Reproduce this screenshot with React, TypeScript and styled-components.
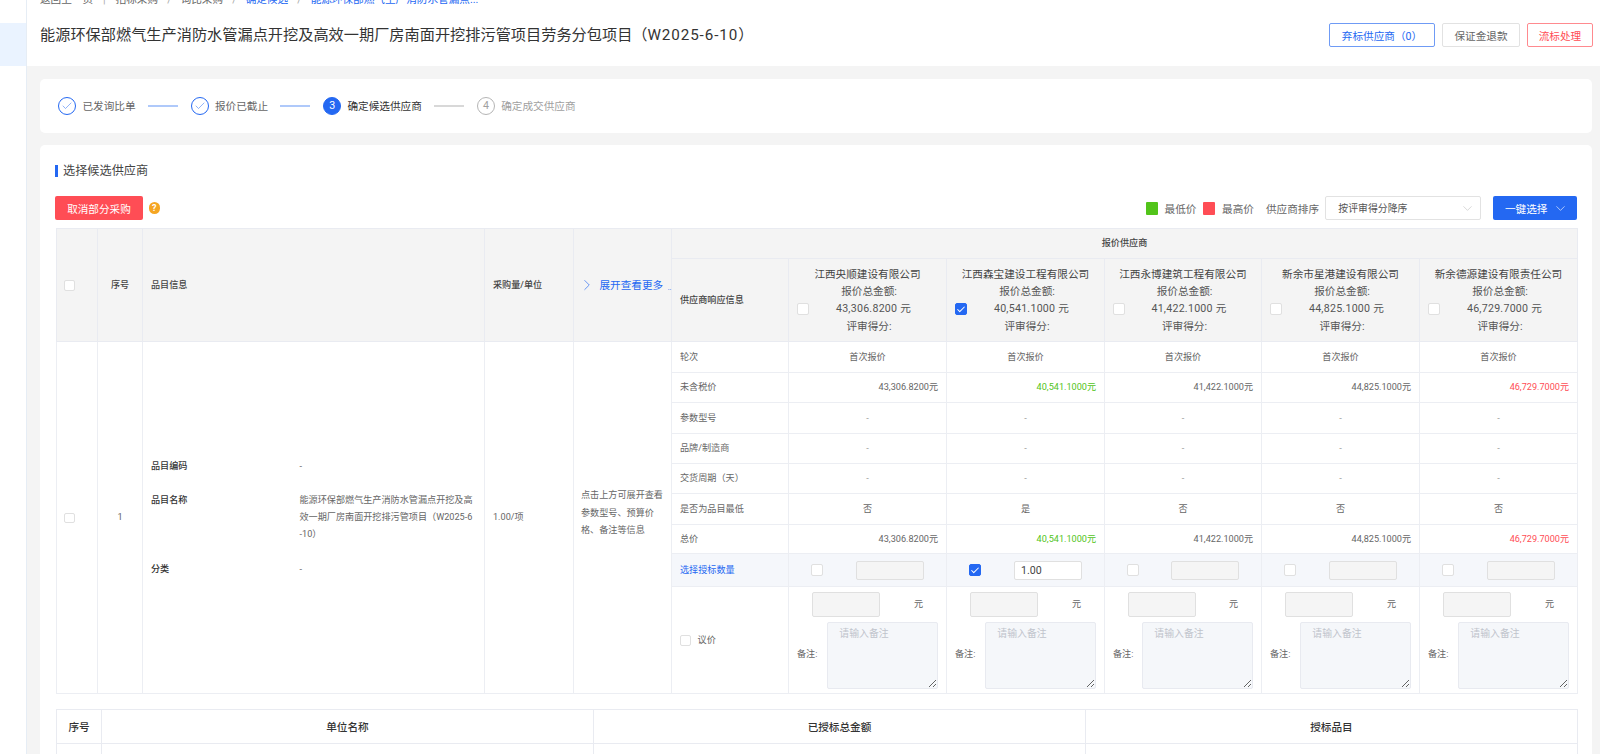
import { Fragment } from "react";
import { createGlobalStyle, styled } from "styled-components";
import { Check, ChevronDown, ChevronRight } from "lucide-react";

const GlobalStyle = createGlobalStyle`
  html, body {
    margin: 0;
    height: 100%;
    overflow: hidden;
  }
  body {
    font-family: Roboto, "Liberation Sans", "Noto Sans CJK SC", sans-serif;
    font-size: 9.12px;
    color: #666;
    background: #fff;
  }
  * { box-sizing: border-box; }
`;

const Layout = styled.div`
  display: flex;
  height: 754px;
  overflow: hidden;
`;

const Sidebar = styled.aside`
  flex: 0 0 27px;
  padding-top: 23px;
  background: #fff;
  border-right: 1px solid #e6edf5;
`;

const SideActive = styled.div`
  height: 43px;
  background: #eaf3ff;
`;

const Main = styled.main`
  flex: 1;
  min-width: 0;
  display: flex;
  flex-direction: column;
  background: #f4f4f4;
`;

const Header = styled.header`
  flex: 0 0 66px;
  padding: 0 7px 0 13px;
  background: #fff;
`;

const Crumbs = styled.nav`
  display: flex;
  align-items: center;
  height: 12px;
  margin-top: -6px;
  font-size: 10.64px;
  line-height: 12px;
`;

const Crumb = styled.span<{ $active?: boolean }>`
  color: ${({ $active }) => ($active ? "#2468f2" : "#666")};
  white-space: nowrap;
`;

const CrumbSep = styled.span`
  width: 22.5px;
  text-align: center;
  color: #aaa;
`;

const TitleRow = styled.div`
  display: flex;
  align-items: center;
  justify-content: space-between;
  margin-top: 17px;
`;

const Title = styled.h1`
  margin: 0;
  font-size: 15.2px;
  font-weight: 400;
  line-height: 24px;
  color: #333;
`;

const TitleCode = styled.span`
  letter-spacing: 0.9px;
`;

const HeaderActions = styled.div`
  display: flex;
  gap: 7px;
`;

const OutlineButton = styled.button<{ $tone: "blue" | "gray" | "red"; $w: number }>`
  width: ${({ $w }) => $w}px;
  height: 24.4px;
  padding: 0;
  font: inherit;
  font-size: 10.64px;
  background: #fff;
  border-radius: 2px;
  border: 1px solid
    ${({ $tone }) =>
      $tone === "blue" ? "#6f9bf5" : $tone === "red" ? "#ff8a8f" : "#e2e2e2"};
  color: ${({ $tone }) =>
    $tone === "blue" ? "#2468f2" : $tone === "red" ? "#ff4d55" : "#666"};
`;

const Content = styled.div`
  padding: 13px 8px 0 13px;
  display: flex;
  flex-direction: column;
  gap: 12px;
`;

const StepsCard = styled.section`
  display: flex;
  align-items: center;
  height: 54px;
  padding-left: 18px;
  background: #fff;
  border-radius: 5px;
`;

const Step = styled.div`
  display: flex;
  align-items: center;
  gap: 6px;
`;

const StepCircle = styled.span<{ $state: "done" | "active" | "todo" }>`
  display: flex;
  align-items: center;
  justify-content: center;
  width: 18.4px;
  height: 18.4px;
  border-radius: 50%;
  font-size: 10.64px;
  border: 1px solid ${({ $state }) => ($state === "todo" ? "#b5b5b5" : "#2468f2")};
  background: ${({ $state }) => ($state === "active" ? "#2468f2" : "#fff")};
  color: ${({ $state }) =>
    $state === "active" ? "#fff" : $state === "done" ? "#2468f2" : "#a0a0a0"};
`;

const StepLabel = styled.span<{ $state: "done" | "active" | "todo" }>`
  font-size: 10.64px;
  white-space: nowrap;
  color: ${({ $state }) =>
    $state === "active" ? "#333" : $state === "done" ? "#666" : "#a0a0a0"};
`;

const StepLine = styled.span<{ $done?: boolean }>`
  width: 30px;
  height: 2px;
  margin: 0 13px 0 6px;
  background: ${({ $done }) => ($done ? "#afc9fa" : "#d8d8d8")};
`;

const TableCard = styled.section`
  padding: 20px 15px 40px 16px;
  background: #fff;
  border-radius: 5px;
`;

const SectionTitle = styled.h2`
  margin: 0 0 0 -1px;
  padding-left: 5px;
  height: 12px;
  font-size: 12.16px;
  font-weight: 400;
  line-height: 12px;
  color: #444;
  border-left: 3px solid #2468f2;
`;

const Toolbar = styled.div`
  display: flex;
  align-items: center;
  justify-content: space-between;
  margin: 19px 0 8px;
  height: 24.4px;
`;

const ToolGroup = styled.div`
  display: flex;
  align-items: center;
`;

const DangerButton = styled.button`
  height: 24.4px;
  width: 88px;
  margin-left: -1px;
  font: inherit;
  font-size: 10.64px;
  color: #fff;
  background: #ff4d55;
  border: 0;
  border-radius: 2px;
`;

const HelpDot = styled.span`
  display: flex;
  align-items: center;
  justify-content: center;
  width: 11.5px;
  height: 11.5px;
  margin-left: 5.5px;
  border-radius: 50%;
  font-size: 9px;
  font-weight: 700;
  color: #fff;
  background: #f5a623;
`;

const Swatch = styled.span<{ $color: string }>`
  width: 12px;
  height: 13px;
  margin-right: 6.6px;
  border-radius: 1px;
  background: ${({ $color }) => $color};
`;

const ToolText = styled.span<{ $gap: number }>`
  margin-right: ${({ $gap }) => $gap}px;
  font-size: 10.64px;
  color: #666;
  white-space: nowrap;
`;

const SortSelect = styled.div`
  display: flex;
  align-items: center;
  justify-content: space-between;
  width: 155.4px;
  height: 24.4px;
  padding: 0 5px 0 12px;
  font-size: 9.88px;
  color: #555;
  background: #fff;
  border: 1px solid #e2e2e2;
  border-radius: 2px;
  svg { color: #bbb; }
`;

const PrimaryButton = styled.button`
  display: flex;
  align-items: center;
  justify-content: space-between;
  width: 84px;
  height: 24.4px;
  margin-left: 12.3px;
  padding: 0 9px 0 12px;
  font: inherit;
  font-size: 10.64px;
  color: #fff;
  background: #2468f2;
  border: 0;
  border-radius: 2px;
`;

const Grid = styled.table`
  width: 100%;
  table-layout: fixed;
  border-collapse: collapse;
  border: 1px solid #e9ebf1;
`;

const HeadCell = styled.th<{ $align?: string }>`
  position: relative;
  padding: 0 8px;
  font-size: 9.12px;
  font-weight: 500;
  line-height: 17.4px;
  color: #444;
  text-align: ${({ $align }) => $align || "left"};
  background: #f4f4f4;
  border: 1px solid #e9ebf1;
`;

const Cell = styled.td<{ $align?: string; $tint?: boolean; $color?: string }>`
  padding: 0 8px;
  font-size: 9.12px;
  line-height: 17.2px;
  color: ${({ $color }) => $color || "#666"};
  text-align: ${({ $align }) => $align || "left"};
  background: ${({ $tint }) => ($tint ? "#f5f7fb" : "#fff")};
  border: 1px solid #eceef3;
`;

const Row = styled.tr<{ $h: number }>`
  height: ${({ $h }) => $h}px;
`;

const Box = styled.span<{ $checked?: boolean; $small?: boolean }>`
  display: inline-flex;
  align-items: center;
  justify-content: center;
  flex: none;
  width: ${({ $small }) => ($small ? "10.6px" : "12px")};
  height: ${({ $small }) => ($small ? "10.6px" : "12px")};
  border-radius: 2px;
  color: #fff;
  background: ${({ $checked }) => ($checked ? "#2468f2" : "#fff")};
  border: 1px solid ${({ $checked }) => ($checked ? "#2468f2" : "#e0e0e0")};
  vertical-align: middle;
`;

const RowBox = styled(Box)`
  margin-left: -1px;
`;

const ExpandLink = styled.div`
  display: flex;
  align-items: center;
  gap: 3.5px;
  margin: 0 -8px 0 -4px;
  font-size: 10.64px;
  font-weight: 400;
  color: #2468f2;
  white-space: nowrap;
  svg { flex: none; }
`;

const ExpandDots = styled.span`
  font-size: 7px;
  margin-left: 1px;
  align-self: flex-end;
  line-height: 12px;
`;

const SupplierName = styled.div`
  margin: 0 -8px;
  font-size: 10.64px;
  font-weight: 400;
  line-height: 17.4px;
  color: #444;
  white-space: nowrap;
`;

const SupplierLine = styled.div`
  padding-left: 3px;
  font-size: 10.64px;
  font-weight: 400;
  line-height: 17.4px;
  color: #555;
`;

const AmountLine = styled(SupplierLine)`
  display: flex;
  align-items: center;
  padding-left: 0;
`;

const AmountText = styled.span`
  flex: 1;
  text-align: center;
  letter-spacing: 0.25px;
`;

const ItemGrid = styled.dl`
  display: grid;
  grid-template-columns: 148.5px 1fr;
  row-gap: 17.2px;
  margin: 0;
  padding-right: 3px;
`;

const ItemLabel = styled.dt`
  font-weight: 500;
  color: #333;
`;

const ItemValue = styled.dd`
  margin: 0;
  color: #666;
  word-break: break-all;
`;

const HintText = styled.div`
  margin: 0 -2px 9px -1px;
  line-height: 17.5px;
  color: #666;
`;

const PickRow = styled.div`
  display: flex;
  align-items: center;
  justify-content: space-between;
  padding: 0 14px 0 14px;
`;

const TextInput = styled.input<{ $tall?: boolean }>`
  width: 68px;
  height: ${({ $tall }) => ($tall ? "24.4px" : "18.4px")};
  padding: 0 6px;
  font: inherit;
  font-size: 10.64px;
  color: #444;
  background: #fff;
  border: 1px solid #e0e0e0;
  border-radius: 2px;
  &:disabled { background: #f5f5f5; }
`;

const BargainTop = styled.div`
  display: flex;
  align-items: center;
  justify-content: space-between;
  padding: 0 15px 0 15px;
`;

const BargainNote = styled.div`
  display: flex;
  align-items: center;
  justify-content: space-between;
  margin-top: 5px;
`;

const NoteInput = styled.textarea`
  display: block;
  width: 110.7px;
  height: 67px;
  padding: 3px 11px;
  font: inherit;
  font-size: 9.88px;
  line-height: 15px;
  background: #f5f7fa;
  border: 1px solid #e8eaf0;
  border-radius: 2px;
  &::placeholder { color: #c0c4cc; }
`;

const BargainLabel = styled.label`
  display: flex;
  align-items: center;
  gap: 7px;
`;

const AwardTable = styled(Grid)`
  margin-top: 15px;
`;

const AwardHead = styled.th`
  padding: 0;
  height: 34px;
  font-size: 10.64px;
  font-weight: 500;
  color: #333;
  background: #fff;
  border: 1px solid #e9ebf1;
`;

const AwardCell = styled.td`
  height: 40px;
  border: 1px solid #e9ebf1;
`;

const crumbs = ["招标采购", "询比采购", "确定候选", "能源环保部燃气生产消防水管漏点..."];

const steps: { label: string; state: "done" | "active" | "todo"; no?: number }[] = [
  { label: "已发询比单", state: "done" },
  { label: "报价已截止", state: "done" },
  { label: "确定候选供应商", state: "active", no: 3 },
  { label: "确定成交供应商", state: "todo", no: 4 },
];

const GREEN = "#52c41a";
const RED = "#ff4d55";

const suppliers = [
  { name: "江西央顺建设有限公司", amount: "43,306.8200", best: "否" },
  { name: "江西森宝建设工程有限公司", amount: "40,541.1000", best: "是", color: GREEN, picked: true },
  { name: "江西永博建筑工程有限公司", amount: "41,422.1000", best: "否" },
  { name: "新余市星港建设有限公司", amount: "44,825.1000", best: "否" },
  { name: "新余德源建设有限责任公司", amount: "46,729.7000", best: "否", color: RED },
];

const columns = [41, 45, 342, 89, 98, 117, 158, 158, 157, 158, 158];

const App = () => {
  return (
    <Layout>
      <GlobalStyle />
      <Sidebar>
        <SideActive />
      </Sidebar>
      <Main>
        <Header>
          <Crumbs>
            <Crumb>返回上一页</Crumb>
            <CrumbSep>|</CrumbSep>
            {crumbs.map((text, index) => (
              <Fragment key={text}>
                {index > 0 && <CrumbSep>/</CrumbSep>}
                <Crumb $active={index > 1}>{text}</Crumb>
              </Fragment>
            ))}
          </Crumbs>
          <TitleRow>
            <Title>
              能源环保部燃气生产消防水管漏点开挖及高效一期厂房南面开挖排污管项目劳务分包项目（
              <TitleCode>W2025-6-10</TitleCode>）
            </Title>
            <HeaderActions>
              <OutlineButton $tone="blue" $w={106}>弃标供应商（0）</OutlineButton>
              <OutlineButton $tone="gray" $w={78}>保证金退款</OutlineButton>
              <OutlineButton $tone="red" $w={66}>流标处理</OutlineButton>
            </HeaderActions>
          </TitleRow>
        </Header>
        <Content>
          <StepsCard>
            {steps.map((step, index) => (
              <Step key={step.label}>
                <StepCircle $state={step.state}>
                  {step.no ?? <Check size={12} strokeWidth={1} />}
                </StepCircle>
                <StepLabel $state={step.state}>{step.label}</StepLabel>
                {index < steps.length - 1 && <StepLine $done={index < 2} />}
              </Step>
            ))}
          </StepsCard>
          <TableCard>
            <SectionTitle>选择候选供应商</SectionTitle>
            <Toolbar>
              <ToolGroup>
                <DangerButton>取消部分采购</DangerButton>
                <HelpDot>?</HelpDot>
              </ToolGroup>
              <ToolGroup>
                <Swatch $color={GREEN} />
                <ToolText $gap={7}>最低价</ToolText>
                <Swatch $color={RED} />
                <ToolText $gap={12}>最高价</ToolText>
                <ToolText $gap={6.3}>供应商排序</ToolText>
                <SortSelect>
                  按评审得分降序
                  <ChevronDown size={15} strokeWidth={0.9} />
                </SortSelect>
                <PrimaryButton>
                  一键选择
                  <ChevronDown size={15} strokeWidth={1} />
                </PrimaryButton>
              </ToolGroup>
            </Toolbar>
            <Grid>
              <colgroup>
                {columns.map((width, index) => (
                  <col key={index} width={width} />
                ))}
              </colgroup>
              <thead>
                <Row $h={30}>
                  <HeadCell rowSpan={2}>
                    <RowBox $small />
                  </HeadCell>
                  <HeadCell rowSpan={2} $align="center">序号</HeadCell>
                  <HeadCell rowSpan={2}>品目信息</HeadCell>
                  <HeadCell rowSpan={2}>采购量/单位</HeadCell>
                  <HeadCell rowSpan={2}>
                    <ExpandLink>
                      <ChevronRight size={18} strokeWidth={0.9} />
                      展开查看更多
                      <ExpandDots>..</ExpandDots>
                    </ExpandLink>
                  </HeadCell>
                  <HeadCell colSpan={6} $align="center">报价供应商</HeadCell>
                </Row>
                <Row $h={83}>
                  <HeadCell>供应商响应信息</HeadCell>
                  {suppliers.map((s) => (
                    <HeadCell key={s.name} $align="center">
                      <SupplierName>{s.name}</SupplierName>
                      <SupplierLine>报价总金额:</SupplierLine>
                      <AmountLine>
                        <Box $checked={s.picked}>
                          {s.picked && <Check size={11} strokeWidth={2.5} />}
                        </Box>
                        <AmountText>{s.amount} 元</AmountText>
                      </AmountLine>
                      <SupplierLine>评审得分:</SupplierLine>
                    </HeadCell>
                  ))}
                </Row>
              </thead>
              <tbody>
                <Row $h={31}>
                  <Cell rowSpan={9}>
                    <RowBox $small />
                  </Cell>
                  <Cell rowSpan={9} $align="center">1</Cell>
                  <Cell rowSpan={9}>
                    <ItemGrid>
                      <ItemLabel>品目编码</ItemLabel>
                      <ItemValue>-</ItemValue>
                      <ItemLabel>品目名称</ItemLabel>
                      <ItemValue>能源环保部燃气生产消防水管漏点开挖及高效一期厂房南面开挖排污管项目（W2025-6-10）</ItemValue>
                      <ItemLabel>分类</ItemLabel>
                      <ItemValue>-</ItemValue>
                    </ItemGrid>
                  </Cell>
                  <Cell rowSpan={9}>1.00/项</Cell>
                  <Cell rowSpan={9}>
                    <HintText>点击上方可展开查看参数型号、预算价格、备注等信息</HintText>
                  </Cell>
                  <Cell>轮次</Cell>
                  {suppliers.map((s) => (
                    <Cell key={s.name} $align="center">首次报价</Cell>
                  ))}
                </Row>
                <Row $h={30}>
                  <Cell>未含税价</Cell>
                  {suppliers.map((s) => (
                    <Cell key={s.name} $align="right" $color={s.color}>{s.amount}元</Cell>
                  ))}
                </Row>
                {[
                  { label: "参数型号", h: 31 },
                  { label: "品牌/制造商", h: 30 },
                  { label: "交货周期（天）", h: 30 },
                ].map((row) => (
                  <Row key={row.label} $h={row.h}>
                    <Cell>{row.label}</Cell>
                    {suppliers.map((s) => (
                      <Cell key={s.name} $align="center" $color="#999">-</Cell>
                    ))}
                  </Row>
                ))}
                <Row $h={31}>
                  <Cell>是否为品目最低</Cell>
                  {suppliers.map((s) => (
                    <Cell key={s.name} $align="center">{s.best}</Cell>
                  ))}
                </Row>
                <Row $h={29}>
                  <Cell>总价</Cell>
                  {suppliers.map((s) => (
                    <Cell key={s.name} $align="right" $color={s.color}>{s.amount}元</Cell>
                  ))}
                </Row>
                <Row $h={33}>
                  <Cell $tint $color="#2468f2">选择授标数量</Cell>
                  {suppliers.map((s) => (
                    <Cell key={s.name} $tint>
                      <PickRow>
                        <Box $checked={s.picked}>
                          {s.picked && <Check size={11} strokeWidth={2.5} />}
                        </Box>
                        {s.picked ? (
                          <TextInput readOnly value="1.00" />
                        ) : (
                          <TextInput disabled />
                        )}
                      </PickRow>
                    </Cell>
                  ))}
                </Row>
                <Row $h={107}>
                  <Cell>
                    <BargainLabel>
                      <Box $small />
                      议价
                    </BargainLabel>
                  </Cell>
                  {suppliers.map((s) => (
                    <Cell key={s.name}>
                      <BargainTop>
                        <TextInput $tall disabled />
                        <span>元</span>
                      </BargainTop>
                      <BargainNote>
                        <span>备注:</span>
                        <NoteInput disabled placeholder="请输入备注" />
                      </BargainNote>
                    </Cell>
                  ))}
                </Row>
              </tbody>
            </Grid>
            <AwardTable>
              <colgroup>
                <col width={45} />
                <col width={492} />
                <col width={492} />
                <col width={492} />
              </colgroup>
              <thead>
                <tr>
                  <AwardHead>序号</AwardHead>
                  <AwardHead>单位名称</AwardHead>
                  <AwardHead>已授标总金额</AwardHead>
                  <AwardHead>授标品目</AwardHead>
                </tr>
              </thead>
              <tbody>
                <tr>
                  <AwardCell />
                  <AwardCell />
                  <AwardCell />
                  <AwardCell />
                </tr>
              </tbody>
            </AwardTable>
          </TableCard>
        </Content>
      </Main>
    </Layout>
  );
};

export default App;
